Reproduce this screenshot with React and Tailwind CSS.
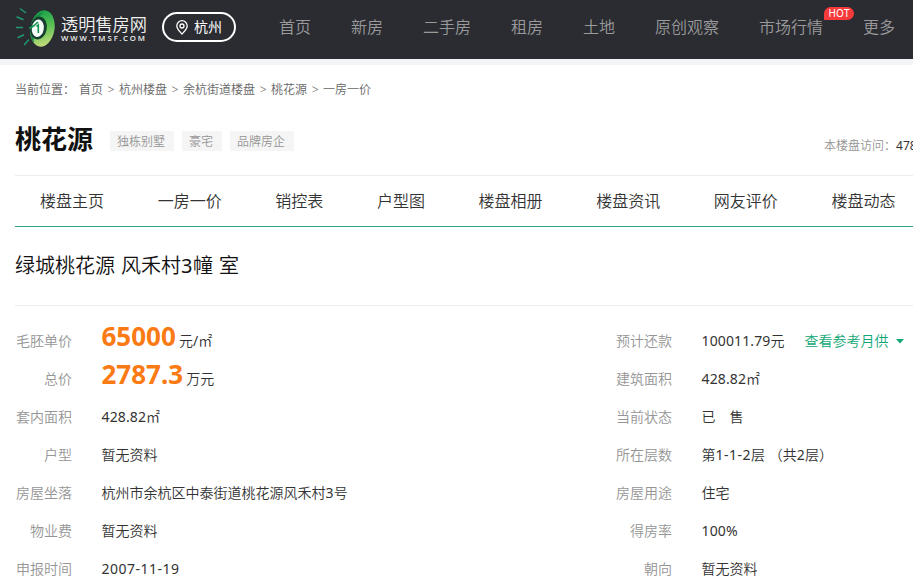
const NAV = ["首页", "新房", "二手房", "租房", "土地", "原创观察", "市场行情", "更多"];
const CRUMBS = ["首页", "杭州楼盘", "余杭街道楼盘", "桃花源", "一房一价"];
const TAGS = ["独栋别墅", "豪宅", "品牌房企"];
const TABS = ["楼盘主页", "一房一价", "销控表", "户型图", "楼盘相册", "楼盘资讯", "网友评价", "楼盘动态"];

const LEFT = [
  { label: "毛胚单价", big: "65000", value: "元/㎡" },
  { label: "总价", big: "2787.3", value: "万元" },
  { label: "套内面积", value: "428.82㎡" },
  { label: "户型", value: "暂无资料" },
  { label: "房屋坐落", value: "杭州市余杭区中泰街道桃花源风禾村3号" },
  { label: "物业费", value: "暂无资料" },
  { label: "申报时间", value: "2007-11-19" },
];

const RIGHT = [
  { label: "预计还款", value: "100011.79元", link: "查看参考月供" },
  { label: "建筑面积", value: "428.82㎡" },
  { label: "当前状态", value: "已\u3000售" },
  { label: "所在层数", value: "第1-1-2层 （共2层）" },
  { label: "房屋用途", value: "住宅" },
  { label: "得房率", value: "100%" },
  { label: "朝向", value: "暂无资料" },
];

function Logo() {
  return (
    <div className="flex h-[40px] w-[132px] shrink-0 items-start">
      <svg width="41" height="40" viewBox="0 0 41 40" className="shrink-0">
        <defs>
          <linearGradient id="ring" x1="0.3" y1="0" x2="0.6" y2="1">
            <stop offset="0" stopColor="#16a04a" />
            <stop offset="0.5" stopColor="#5cc254" />
            <stop offset="1" stopColor="#c5dc7c" />
          </linearGradient>
        </defs>
        <g stroke="#1f9a70" strokeWidth="1.500" strokeLinecap="round">
          <path d="M5.500 1l5 3.500M2 9l6 2.500M1.500 19.500h6M3 29.500l5.500-2.500M9.500 36.500l4-4.500" />
        </g>
        <ellipse cx="27.500" cy="20.500" rx="12" ry="18.300" transform="rotate(10 27.500 20.500)" fill="url(#ring)" />
        <path d="M29 4c-8 1-14 9-14 19 0 5 2 9 4 12-1-12 0-23 10-31z" fill="#168b48" />
        <ellipse cx="23.500" cy="20" rx="8.300" ry="11.500" transform="rotate(10 23.500 20)" fill="#163f2f" />
        <ellipse cx="22.800" cy="20.300" rx="6" ry="8.800" transform="rotate(8 22.800 20.300)" fill="#f4faf6" />
        <path d="M14 20.500c3-1 6-3 9-6.500" fill="none" stroke="#159451" strokeWidth="1.600" />
        <path d="M21.500 18.500l1.800-1.500v8" fill="none" stroke="#159451" strokeWidth="1.600" />
      </svg>
      <div className="ml-[5px] text-[#f4f4f4]">
        <div className="mt-[7px] h-[19px] whitespace-nowrap text-[17.200px] leading-[19px]">透明售房网</div>
        <div className="h-[9px] whitespace-nowrap text-[7.800px] leading-[9px] font-medium tracking-[1.950px]">WWW.TMSF.COM</div>
      </div>
    </div>
  );
}

// Latin runs keep the regular weight beside the lighter Chinese glyphs.
function Mixed({ text, latin = "tracking-[0.120px]" }) {
  return text.split(/([\x20-\x7e]+)/).map((part, i) =>
    i % 2 ? (
      <span key={i} className={`font-normal whitespace-pre ${part.includes("-") ? "tracking-[0.500px]" : latin}`}>
        {part}
      </span>
    ) : (
      part
    ),
  );
}

function Row({ row }) {
  return (
    <div className="flex h-[38px] items-start text-[14px] leading-[38px]">
      <div className={row.big ? "-mt-px flex items-baseline whitespace-nowrap" : "flex items-baseline whitespace-nowrap"}>
        <span className="w-[57px] shrink-0 text-right text-[#959595]">{row.label}</span>
        <span className="ml-[29.500px] text-[#333]">
          {row.big && <b className="mr-[3px] text-[26px] leading-[30px] font-bold text-[#fb7a14]">{row.big}</b>}
          <Mixed text={row.value} />
        </span>
        {row.link && (
          <span className="ml-[20px] flex items-center text-[#0fa775]">
            {row.link}
            <svg width="8" height="5" viewBox="0 0 8 5" className="ml-[8px]">
              <path d="M0 0h8L4 4.500z" fill="currentColor" />
            </svg>
          </span>
        )}
      </div>
    </div>
  );
}

export default function App() {
  return (
    <div className="h-[587px] w-[913px] overflow-hidden bg-white font-[350] font-['Noto_Sans','Noto_Sans_CJK_SC',sans-serif] text-[#333]">
      <header className="flex h-[59px] items-start bg-[#2b2c31] pl-[15px]">
        <div className="mt-[8px]">
          <Logo />
        </div>
        <div className="mt-[12px] ml-[15px] flex h-[30px] w-[74px] shrink-0 items-center rounded-full border-2 border-white pl-[12px] text-[14px] font-normal text-white">
          <svg width="12" height="15" viewBox="0 0 12 15" fill="none" stroke="currentColor" strokeWidth="1.300">
            <path d="M6 14C3.500 11.200.8 8.700.8 5.900a5.200 5.200 0 0110.400 0C11.200 8.700 8.500 11.200 6 14z" />
            <circle cx="6" cy="6" r="2" />
          </svg>
          <span className="ml-[6px] whitespace-nowrap leading-[20px]">杭州</span>
        </div>
        <nav className="ml-[43px] flex h-[53px] items-center gap-[40px] text-[16px] whitespace-nowrap text-[#9a9a9c]">
          {NAV.map((item) => (
            <span key={item} className="relative">
              {item}
              {item === "市场行情" && (
                <i className="absolute -top-[8px] left-[65px] flex h-[13px] w-[30px] items-center justify-center rounded-[7px] rounded-bl-none bg-[#f93a3a] text-[10px] leading-[13px] font-normal tracking-[0.300px] text-white not-italic">
                  HOT
                </i>
              )}
            </span>
          ))}
        </nav>
      </header>
      <div className="h-[6px] bg-[#f2f4f6]" />

      <main className="pl-[15px]">
        <div className="flex h-[50px] items-center text-[12px] whitespace-nowrap text-[#666]">
          <span className="mr-[4px]">当前位置：</span>
          {CRUMBS.map((crumb, i) => (
            <span key={crumb} className="flex">
              {i > 0 && <span className="w-[16px] text-center">&gt;</span>}
              {crumb}
            </span>
          ))}
        </div>

        <div className="flex h-[61px] border-b border-[#ececec]">
          <h1 className="mt-[6px] w-[78px] text-[26px] leading-[36px] font-bold whitespace-nowrap text-[#111]">桃花源</h1>
          <div className="mt-[16px] ml-[17px] flex gap-[8px]">
            {TAGS.map((tag) => (
              <span key={tag} className="h-[20px] bg-[#f5f5f5] pr-[9px] pl-[7px] text-[12px] leading-[22px] text-[#959595]">
                {tag}
              </span>
            ))}
          </div>
          <div className="mt-[21px] ml-auto w-[89px] overflow-hidden text-[12px] leading-[20px] whitespace-nowrap text-[#959595]">
            本楼盘访问：<span className="font-normal text-[#333]">478</span>
          </div>
        </div>

        <nav className="flex h-[51px] items-center gap-[53.640px] border-b border-[#2aa58a] pl-[25px] text-[16px] whitespace-nowrap text-[#333]">
          {TABS.map((tab) => (
            <span key={tab}>{tab}</span>
          ))}
        </nav>

        <h2 className="h-[79px] border-b border-[#ececec] text-[20px] leading-[78px] whitespace-nowrap text-[#111]">
          <Mixed text="绿城桃花源 风禾村3幢 室" latin="tracking-[0.700px]" />
        </h2>

        <section className="mt-[16px] flex">
          <div className="w-[600px] shrink-0">
            {LEFT.map((row) => (
              <Row key={row.label} row={row} />
            ))}
          </div>
          <div>
            {RIGHT.map((row) => (
              <Row key={row.label} row={row} />
            ))}
          </div>
        </section>
      </main>
    </div>
  );
}
